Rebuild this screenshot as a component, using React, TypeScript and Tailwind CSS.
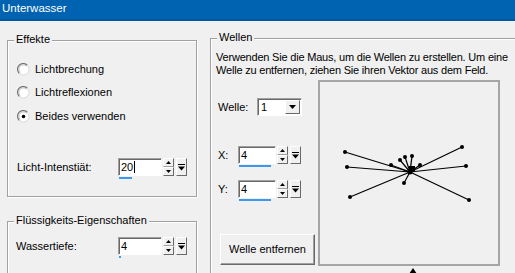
import React from "react";

function Radio({ checked }: { checked?: boolean }) {
  return (
    <svg width="13" height="13" viewBox="0 0 13 13" className="shrink-0">
      <circle cx="6.5" cy="6.5" r="5.5" fill="#fff" stroke="#d8d8d8" />
      <path d="M2.2 10.3 A5.5 5.5 0 0 1 10.3 2.2" fill="none" stroke="#6e6e6e" strokeWidth="1.1" />
      <path d="M3.2 9.3 A4.3 4.3 0 0 1 9.3 3.2" fill="none" stroke="#bdbdbd" strokeWidth="0.9" />
      {checked && <circle cx="6.5" cy="6.5" r="1.8" fill="#000" />}
    </svg>
  );
}

function UpDown() {
  return (
    <div className="flex flex-col w-[11px] h-full">
      <div className="flex-1 flex items-center justify-center bg-[#f0f0f0] border border-t-white border-l-white border-r-[#696969] border-b-[#a0a0a0]">
        <svg width="5" height="3" viewBox="0 0 5 3"><path d="M2.5 0 L5 3 L0 3 Z" fill="#000" /></svg>
      </div>
      <div className="flex-1 flex items-center justify-center bg-[#f0f0f0] border border-t-white border-l-white border-r-[#696969] border-b-[#696969]">
        <svg width="5" height="3" viewBox="0 0 5 3"><path d="M0 0 L5 0 L2.5 3 Z" fill="#000" /></svg>
      </div>
    </div>
  );
}

function ResetBtn() {
  return (
    <div className="w-[11px] h-full flex items-center justify-center bg-[#f0f0f0] border border-t-white border-l-white border-r-[#696969] border-b-[#696969]">
      <svg width="7" height="7" viewBox="0 0 7 7">
        <rect x="0" y="0" width="7" height="1" fill="#000" />
        <path d="M0 2.5 L7 2.5 L3.5 6.5 Z" fill="#000" />
      </svg>
    </div>
  );
}

function SpinBox({
  editCls,
  barCls,
  value,
  caret,
}: {
  editCls: string;
  barCls: string;
  value: string;
  caret?: boolean;
}) {
  return (
    <div className="flex flex-col">
      <div className="flex h-[18px] items-stretch">
        <div
          className={`flex items-center bg-white border border-t-[#a0a0a0] border-l-[#a0a0a0] border-r-white border-b-white shadow-[inset_1px_1px_0_#696969] pl-[2px] ${editCls}`}
        >
          <span>{value}</span>
          {caret && <span className="inline-block w-[1px] h-[12px] bg-black ml-[1px]" />}
        </div>
        <div className="ml-[1px] h-full">
          <UpDown />
        </div>
        <div className="ml-[2px] h-full">
          <ResetBtn />
        </div>
      </div>
      <div className={`mt-[1px] ml-[1px] h-[2px] bg-[#3a98ee] ${barCls}`} />
    </div>
  );
}

function GroupLabel({ children }: { children: React.ReactNode }) {
  return (
    <span className="absolute top-[-8px] left-[6px] px-[2px] bg-[#f0f0f0] whitespace-nowrap">
      {children}
    </span>
  );
}

const pts: [number, number][] = [
  [27, 72],
  [29, 87],
  [32, 117],
  [144, 67],
  [148, 86],
  [151, 120],
  [73, 85],
  [82, 80],
  [87, 77],
  [94, 76],
  [102, 85],
  [86, 103],
];

export default function App() {
  return (
    <div className="w-[515px] h-[273px] overflow-hidden bg-[#f0f0f0] text-black text-[11px] leading-[13px] font-['Liberation_Sans',Arial,sans-serif] flex flex-col">
      <div className="h-[21px] shrink-0 bg-[#0063b1] border-b-2 border-[#00589e] pl-[2px] pt-[2px] text-white text-[11.5px]">
        Unterwasser
      </div>
      <div className="flex pl-[7px] items-start">
        {/* left column */}
        <div className="w-[190px] mt-[19px] shrink-0 flex flex-col">
          <div className="relative h-[157px] border border-[#a0a0a0] shadow-[inset_1px_1px_0_#fff,1px_1px_0_#fff]">
            <GroupLabel>Effekte</GroupLabel>
            <div className="flex flex-col pl-[9px] pt-[22px]">
              <div className="flex items-center h-[13px] gap-[5px]">
                <Radio />
                <span>Lichtbrechung</span>
              </div>
              <div className="flex items-center h-[13px] gap-[5px] mt-[10px]">
                <Radio />
                <span>Lichtreflexionen</span>
              </div>
              <div className="flex items-center h-[13px] gap-[5px] mt-[11px]">
                <Radio checked />
                <span>Beides verwenden</span>
              </div>
              <div className="flex items-start mt-[35px]">
                <span className="w-[101px] h-[18px] flex items-center">Licht-Intenstiät:</span>
                <SpinBox editCls="w-[44px]" barCls="w-[13px]" value="20" caret />
              </div>
            </div>
          </div>
          <div className="relative mt-[24px] h-[80px] border border-[#a0a0a0] shadow-[inset_1px_1px_0_#fff,1px_1px_0_#fff]">
            <GroupLabel>Flüssigkeits-Eigenschaften</GroupLabel>
            <div className="flex items-start pl-[8px] pt-[15px]">
              <span className="w-[102px] h-[18px] flex items-center">Wassertiefe:</span>
              <SpinBox editCls="w-[44px]" barCls="w-[2px]" value="4" />
            </div>
          </div>
        </div>

        {/* right column */}
        <div className="relative ml-[13px] mt-[17px] w-[320px] h-[260px] shrink-0 border border-[#a0a0a0] shadow-[inset_1px_1px_0_#fff,1px_1px_0_#fff]">
          <GroupLabel>Wellen</GroupLabel>
          <div className="pl-[5px] pt-[12px] whitespace-nowrap tracking-[-0.2px]">
            Verwenden Sie die Maus, um die Wellen zu erstellen. Um eine
            <br />
            Welle zu entfernen, ziehen Sie ihren Vektor aus dem Feld.
          </div>
          <div className="flex mt-[3px] ml-[7px]">
            <div className="w-[100px] shrink-0 flex flex-col">
              <div className="flex items-center mt-[18px] h-[18px]">
                <span className="w-[39px]">Welle:</span>
                <div className="w-[45px] h-[18px] flex items-stretch bg-white border border-t-[#a0a0a0] border-l-[#a0a0a0] border-r-white border-b-white shadow-[inset_1px_1px_0_#696969]">
                  <span className="flex-1 flex items-center pl-[3px]">1</span>
                  <div className="w-[15px] mr-[1px] my-[1px] flex items-center justify-center bg-[#f0f0f0] border border-t-white border-l-white border-r-[#696969] border-b-[#696969]">
                    <svg width="7" height="4" viewBox="0 0 7 4"><path d="M0 0 L7 0 L3.5 4 Z" fill="#000" /></svg>
                  </div>
                </div>
              </div>
              <div className="flex items-start mt-[30px]">
                <span className="w-[20px] h-[18px] flex items-center">X:</span>
                <SpinBox editCls="w-[38px]" barCls="w-[32px]" value="4" />
              </div>
              <div className="flex items-start mt-[13px]">
                <span className="w-[20px] h-[18px] flex items-center">Y:</span>
                <SpinBox editCls="w-[38px]" barCls="w-[32px]" value="4" />
              </div>
              <button className="mt-[33px] ml-[2px] w-[95px] h-[31px] flex items-center justify-center bg-[#f0f0f0] border border-t-white border-l-white border-r-[#696969] border-b-[#696969] shadow-[inset_-1px_-1px_0_#a0a0a0]">
                Welle entfernen
              </button>
            </div>
            <div className="flex flex-col">
              <div className="relative w-[182px] h-[186px] border-2 border-[#a5a5a5]">
                <svg
                  width="182"
                  height="186"
                  viewBox="0 0 182 186"
                  className="absolute left-[-2px] top-[-2px]"
                >
                  {pts.map(([x, y], i) => (
                    <line key={i} x1={92} y1={92} x2={x} y2={y} stroke="#000" strokeWidth="1.2" />
                  ))}
                  {pts.map(([x, y], i) => (
                    <circle key={"c" + i} cx={x} cy={y} r={2} fill="#000" />
                  ))}
                  <rect x={91} y={86} width={6} height={6} fill="#000" />
                  <circle cx={92} cy={92} r={2.5} fill="#000" />
                </svg>
              </div>
              <svg width="8" height="6" viewBox="0 0 8 6" className="ml-[91px] mt-[2px]">
                <path d="M4 0 L8 6 L0 6 Z" fill="#000" />
              </svg>
            </div>
          </div>
        </div>
      </div>
    </div>
  );
}
